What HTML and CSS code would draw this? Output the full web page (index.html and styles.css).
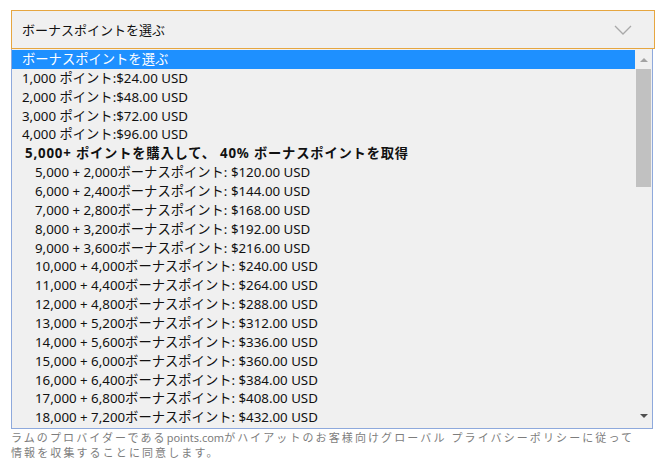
FILE: index.html
```html
<!DOCTYPE html>
<html lang="ja">
<head>
  <meta charset="UTF-8" />
  <title>ボーナスポイントを選ぶ</title>
  <link rel="stylesheet" href="styles.css">
</head>
<body>
  <div class="picker">
    <!-- closed select -->
    <div class="select-box">
      <span>ボーナスポイントを選ぶ</span>
      <svg class="chevron" width="18" height="10" viewBox="0 0 18 10">
        <polyline points="1,1 9,9 17,1" fill="none" stroke="#a9a9a9" stroke-width="1.3"/>
      </svg>
    </div>
    <!-- open option list -->
    <div class="listbox">
      <ul class="options">
        <li class="opt selected">ボーナスポイントを選ぶ</li>
        <li class="opt">1,000 ポイント:$24.00 USD</li>
        <li class="opt">2,000 ポイント:$48.00 USD</li>
        <li class="opt">3,000 ポイント:$72.00 USD</li>
        <li class="opt">4,000 ポイント:$96.00 USD</li>
        <li class="group">5,000+ ポイントを購入して、 40% ボーナスポイントを取得</li>
        <li class="opt sub">5,000 + 2,000ボーナスポイント: $120.00 USD</li>
        <li class="opt sub">6,000 + 2,400ボーナスポイント: $144.00 USD</li>
        <li class="opt sub">7,000 + 2,800ボーナスポイント: $168.00 USD</li>
        <li class="opt sub">8,000 + 3,200ボーナスポイント: $192.00 USD</li>
        <li class="opt sub">9,000 + 3,600ボーナスポイント: $216.00 USD</li>
        <li class="opt sub">10,000 + 4,000ボーナスポイント: $240.00 USD</li>
        <li class="opt sub">11,000 + 4,400ボーナスポイント: $264.00 USD</li>
        <li class="opt sub">12,000 + 4,800ボーナスポイント: $288.00 USD</li>
        <li class="opt sub">13,000 + 5,200ボーナスポイント: $312.00 USD</li>
        <li class="opt sub">14,000 + 5,600ボーナスポイント: $336.00 USD</li>
        <li class="opt sub">15,000 + 6,000ボーナスポイント: $360.00 USD</li>
        <li class="opt sub">16,000 + 6,400ボーナスポイント: $384.00 USD</li>
        <li class="opt sub">17,000 + 6,800ボーナスポイント: $408.00 USD</li>
        <li class="opt sub">18,000 + 7,200ボーナスポイント: $432.00 USD</li>
      </ul>
      <div class="scrollbar">
        <span class="arrow up"></span>
        <span class="thumb"></span>
        <span class="arrow down"></span>
      </div>
    </div>
  </div>
  <p class="note">ラムのプロバイダーである<span class="latin">points.com</span>がハイアットのお客様向けグローバル プライバシーポリシーに従って<br>情報を収集することに同意します。</p>
</body>
</html>
```

FILE: styles.css
```css
* {
  margin: 0;
  padding: 0;
  box-sizing: border-box;
}
body {
  background: #fff;
  padding: 10px 5px 0 11px;
  font-family: "Noto Sans", "Noto Sans CJK JP", sans-serif;
  color: #111;
}
/* Closed select */
.select-box {
  height: 39px;
  width: 644px;
  border: 1px solid #e6a640;
  background: #f0f0f0;
  display: flex;
  align-items: center;
  justify-content: space-between;
  padding: 0 22px 0 10px;
  font-size: 13px;
}
.chevron {
  display: block;
}
/* Open list */
.listbox {
  width: 642px;
  height: 380px;
  border: 1px solid #8ea9dc;
  border-top: none;
  background: #f0f0f0;
  display: flex;
  overflow: hidden;
}
.options {
  list-style: none;
  flex: 1;
  padding-top: 1px;
}
.opt,
.group {
  height: 18.87px;
  line-height: 18.87px;
  font-size: 13.3px;
  white-space: nowrap;
  padding-left: 10px;
}
.opt.selected {
  background: #1e90ff;
  color: #fff;
}
.group {
  font-weight: bold;
  padding-left: 13px;
  letter-spacing: 0.8px;
}
.opt.sub {
  padding-left: 23px;
}
/* Scrollbar */
.scrollbar {
  width: 17px;
  display: flex;
  flex-direction: column;
  align-items: center;
  padding: 9px 0 10px;
}
.arrow {
  width: 0;
  height: 0;
  border-left: 4px solid transparent;
  border-right: 4px solid transparent;
}
.arrow.up {
  border-bottom: 4px solid #a3a3a3;
}
.arrow.down {
  margin-top: auto;
  border-top: 4px solid #505050;
}
.thumb {
  width: 15px;
  height: 118px;
  margin-top: 7px;
  background: #c1c1c1;
}
/* Footer note */
.note {
  padding-top: 1px;
  font-size: 11px;
  line-height: 15px;
  letter-spacing: 2.1px;
  color: #7d7d7d;
  white-space: nowrap;
}
.note .latin {
  letter-spacing: 0;
}
```
